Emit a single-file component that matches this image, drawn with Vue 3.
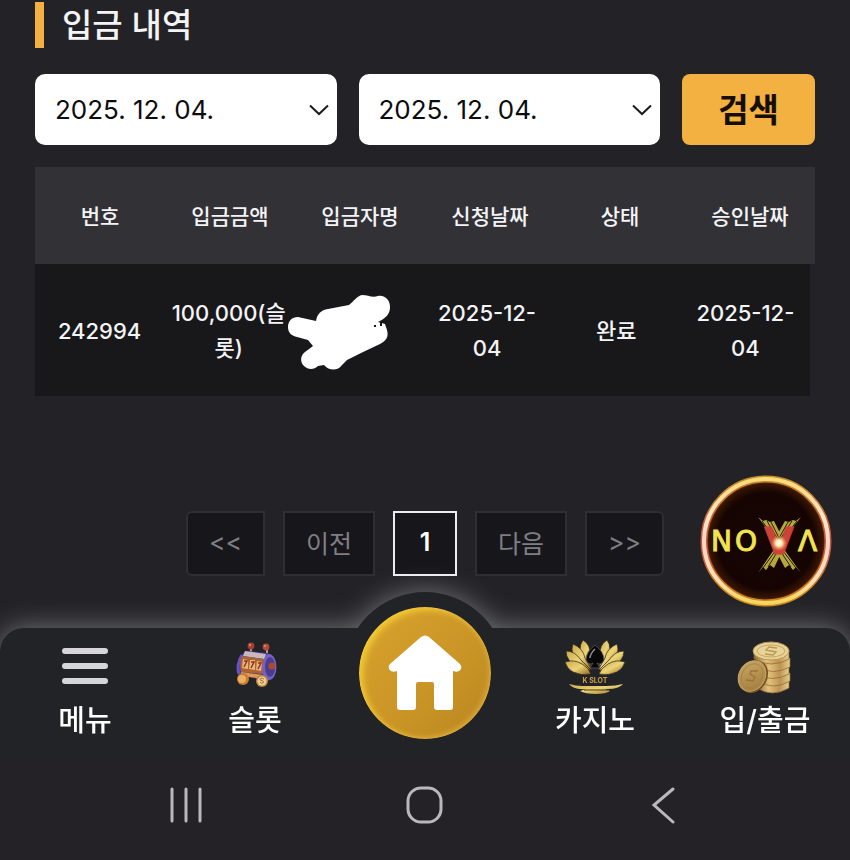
<template>
  <div class="deposit-page">
    <main class="content">
      <h1 class="page-title">입금 내역</h1>

      <form class="search-form" @submit.prevent>
        <label class="date-box">
          <select v-model="startDate" aria-label="시작일">
            <option>2025. 12. 04.</option>
          </select>
          <svg class="chevron" viewBox="0 0 20 12"><path d="M1 1.5 L10 10 L19 1.5" /></svg>
        </label>
        <label class="date-box">
          <select v-model="endDate" aria-label="종료일">
            <option>2025. 12. 04.</option>
          </select>
          <svg class="chevron" viewBox="0 0 20 12"><path d="M1 1.5 L10 10 L19 1.5" /></svg>
        </label>
        <button type="submit" class="search-btn">검색</button>
      </form>

      <table class="history">
        <thead>
          <tr>
            <th v-for="h in headers" :key="h">{{ h }}</th>
          </tr>
        </thead>
        <tbody>
          <tr v-for="row in rows" :key="row.no">
            <td>{{ row.no }}</td>
            <td>{{ row.amount }}</td>
            <td class="name-cell">
              <!-- 입금자명 가림 -->
              <svg class="mask" viewBox="0 0 104 76">
                <path d="M10 22 C4 22 0 26 0 32 C0 38 4 41 9 42 L20 45 L25 51 L17 57 C12 61 12 67 16 71 C20 75 26 75 30 71 L36 70 C41 76 50 76 54 70 L59 65 L73 58 L92 49 C98 46 101 42 99 35 L97 29 L90 27 C98 23 102 19 102 12 C102 4 96 0 90 1 C84 3 80 0 74 0 C69 1 66 6 61 10 L40 14 C33 15 29 19 28 26 Z" />
                <path class="stroke" d="M86 31 H88 M93 26 V31" />
              </svg>
            </td>
            <td>{{ row.requested }}</td>
            <td>{{ row.status }}</td>
            <td>{{ row.approved }}</td>
          </tr>
        </tbody>
      </table>

      <nav class="pagination" aria-label="페이지">
        <button
          v-for="p in pages"
          :key="p"
          type="button"
          :class="{ active: p === '1' }"
        >{{ p }}</button>
      </nav>
    </main>

    <a href="#nova" class="nova" aria-label="NOVA">
      <svg viewBox="0 0 132 132">
        <defs>
          <linearGradient id="ring" x1="0" y1="0" x2="0" y2="1">
            <stop offset="0" stop-color="#f8dc78" />
            <stop offset="0.3" stop-color="#ffe5c8" />
            <stop offset="0.55" stop-color="#ffd5ca" />
            <stop offset="0.8" stop-color="#ffe2b8" />
            <stop offset="1" stop-color="#f6d45e" />
          </linearGradient>
          <linearGradient id="halo" x1="0" y1="0" x2="0" y2="1">
            <stop offset="0" stop-color="#c88b2c" />
            <stop offset="0.5" stop-color="#c84f3c" />
            <stop offset="1" stop-color="#ce8c20" />
          </linearGradient>
          <radialGradient id="disc">
            <stop offset="0" stop-color="#170503" />
            <stop offset="0.78" stop-color="#150402" />
            <stop offset="0.92" stop-color="#381502" />
            <stop offset="1" stop-color="#a5540d" />
          </radialGradient>
          <radialGradient id="flare">
            <stop offset="0" stop-color="#fff" />
            <stop offset="0.4" stop-color="#ffe9ad" />
            <stop offset="1" stop-color="#f2a05a" stop-opacity="0" />
          </radialGradient>
        </defs>
        <circle cx="66" cy="66" r="62" fill="url(#disc)" />
        <circle cx="66" cy="66" r="62" fill="none" stroke="url(#halo)" stroke-width="7" />
        <circle cx="66" cy="66" r="62" fill="none" stroke="url(#ring)" stroke-width="4" />
        <g fill="#b5a83f">
          <path d="M58 42 L63 46 L66 45 L70 47 L74 46 L82 62 L76 66 Z" />
          <path d="M101 42 L96 46 L93 45 L89 47 L85 46 L76 62 L82 66 Z" />
          <path d="M58 98 L63 92 L66 95 L70 90 L74 93 L83 74 L75 73 Z" />
          <path d="M101 98 L96 92 L93 95 L89 90 L85 93 L75 74 L83 73 Z" />
        </g>
        <path d="M62 46 L78 68 M67 46 L79 66 M71 47 L80 65 M97 46 L80 68 M92 46 L79 66 M88 47 L78 65 M63 93 L78 72 M68 92 L79 74 M96 93 L80 72 M91 92 L79 74" fill="none" stroke="#2b1a0a" />
        <g class="nova-text">
          <text x="11" y="76">N</text>
          <text x="35" y="76">O</text>
          <text x="98" y="76">Λ</text>
          <text x="79" y="79" class="nova-v">V</text>
        </g>
        <circle cx="79" cy="68" r="8" fill="url(#flare)" />
      </svg>
    </a>

    <nav class="tab-bar">
      <a href="#menu" class="tab">
        <svg class="tab-icon" viewBox="0 0 60 56">
          <path d="M10 11 H50 M10 26 H50 M10 41 H50" stroke="#d6d6da" stroke-width="6" stroke-linecap="round" />
        </svg>
        <span>메뉴</span>
      </a>
      <a href="#slot" class="tab">
        <svg class="tab-icon" viewBox="0 0 60 56">
          <path d="M26 13 V6 M42 14 V7" stroke="#b29aa0" stroke-width="2" />
          <circle cx="26" cy="6" r="3.4" fill="#a83d32" />
          <circle cx="41" cy="7" r="3.4" fill="#b8483b" />
          <circle cx="25" cy="5" r="1" fill="#e8907d" />
          <circle cx="40" cy="6" r="1" fill="#e8907d" />
          <path d="M18 13 Q20 10 25 11 L42 13 Q51 15 51 26 Q51 39 43 41 L17 36 Q11 34 12 25 Z" fill="#45358e" />
          <ellipse cx="44" cy="27" rx="7.5" ry="13" fill="#7461c4" />
          <ellipse cx="45" cy="27" rx="5" ry="10" fill="#4a3c90" />
          <path d="M17 15 Q11 25 14 34" fill="none" stroke="#6552cc" stroke-width="3" />
          <path d="M20 11 L41 14 L39 19 L18 16 Z" fill="#c9b8be" />
          <path d="M17 16 L39 19 Q36 27 38 34 L16 32 Q14 24 17 16 Z" fill="#ad6435" />
          <path d="M18 19 L23 20 V29 L17 28 Z M25 20 L30 20 V30 L24 29 Z M32 21 L37 22 L36 31 L31 30 Z" fill="#edb476" />
          <path d="M19 21 H22 L19 27 M26 22 H29 L26 28 M33 23 H36 L33 29" fill="none" stroke="#8b352a" stroke-width="1.5" />
          <path d="M16 32 L38 35 L39 39 L17 36 Z" fill="#e09a4c" />
          <circle cx="47" cy="26" r="3.5" fill="#a84b31" />
          <circle cx="18" cy="39" r="6" fill="#c87d35" />
          <circle cx="17" cy="39" r="4" fill="#eaaf61" />
          <circle cx="37" cy="41" r="6" fill="#bd8741" />
          <circle cx="37" cy="41" r="4.5" fill="#edcf93" />
          <path d="M39 39 Q35 37 35 40 Q40 41 38 43 Q36 44 35 42" fill="none" stroke="#a57537" />
        </svg>
        <span>슬롯</span>
      </a>
      <a href="#home" class="tab home" aria-label="홈">
        <span class="home-btn">
          <svg viewBox="0 0 76 76">
            <path d="M34 2 Q38 -1 42 2 L73 29 Q75 31 74 34 Q72 38 66 36 V72 Q66 75 63 75 H50 Q47 75 47 72 V49 Q47 47 45 47 H31 Q29 47 29 49 V72 Q29 75 26 75 H13 Q10 75 10 72 V36 Q4 38 2 34 Q1 31 3 29 Z" fill="#fff" />
          </svg>
        </span>
      </a>
      <a href="#casino" class="tab">
        <svg class="tab-icon" viewBox="0 0 60 56">
          <defs>
            <linearGradient id="gold" x1="0" y1="0" x2="1" y2="1">
              <stop offset="0" stop-color="#c9a746" />
              <stop offset="0.5" stop-color="#ecd478" />
              <stop offset="1" stop-color="#8f681a" />
            </linearGradient>
          </defs>
          <g fill="url(#gold)" stroke="#29231a" stroke-width="0.7">
            <path d="M18 0 Q26 5 25 15 Q24 21 26 27 Q14 18 15 9 Q15 4 18 0 Z" />
            <path d="M8 4 Q18 8 20 18 L27 30 Q12 26 8 15 Q6 9 8 4 Z" />
            <path d="M1 11 Q10 11 16 20 L26 30 Q11 30 4 20 Q1 16 1 11 Z" />
            <path d="M0 22 Q9 19 17 24 Q24 28 26 34 Q16 36 8 32 Q2 29 0 22 Z" />
            <path d="M42 0 Q34 5 35 15 Q36 21 34 27 Q46 18 45 9 Q45 4 42 0 Z" />
            <path d="M52 4 Q42 8 40 18 L33 30 Q48 26 52 15 Q54 9 52 4 Z" />
            <path d="M59 11 Q50 11 44 20 L34 30 Q49 30 56 20 Q59 16 59 11 Z" />
            <path d="M60 22 Q51 19 43 24 Q36 28 34 34 Q44 36 52 32 Q58 29 60 22 Z" />
          </g>
          <path d="M30 5 Q39 12 39 20 Q36 26 32 23 L35 28 H25 L28 23 Q24 26 21 20 Q21 12 30 5 Z" fill="#08080b" stroke="#55555e" stroke-width="0.8" />
          <path d="M30 9 Q25 14 25 18" fill="none" stroke="#8b8b94" stroke-width="1.5" />
          <text x="30" y="43" class="kslot">K SLOT</text>
          <path d="M4 44 Q11 46 18 46 H42 Q51 46 58 44 Q54 49 43 49 H40 L45 51 Q41 54 31 54 Q20 54 15 51 L21 49 Q8 50 4 44 Z" fill="url(#gold)" />
          <path d="M19 50 H43" stroke="#463612" stroke-width="1" />
        </svg>
        <span>카지노</span>
      </a>
      <a href="#cash" class="tab">
        <svg class="tab-icon" viewBox="0 0 60 56">
          <defs>
            <linearGradient id="coin-side">
              <stop offset="0" stop-color="#8f6b36" />
              <stop offset="0.35" stop-color="#e2c27c" />
              <stop offset="0.7" stop-color="#bd9352" />
              <stop offset="1" stop-color="#e7cf8f" />
            </linearGradient>
            <linearGradient id="coin-face" x1="0" y1="0" x2="1" y2="1">
              <stop offset="0" stop-color="#c9aa66" />
              <stop offset="1" stop-color="#a07838" />
            </linearGradient>
          </defs>
          <g fill="url(#coin-side)" stroke="#8a632f" stroke-width="0.7">
            <path d="M22 40 V48 Q37 58 54 48 V40 Z" />
            <path d="M23 33 V41 Q38 51 55 41 V33 Z" />
            <path d="M22 26 V34 Q37 43 54 34 V26 Z" />
            <path d="M23 18 V27 Q38 36 55 27 V18 Z" />
            <path d="M19 10 V19 Q36 29 54 19 V10 Z" />
          </g>
          <ellipse cx="36" cy="11" rx="18" ry="9" fill="#e8d398" stroke="#ba9650" />
          <ellipse cx="36" cy="11" rx="14" ry="6" fill="none" stroke="#c6a663" />
          <path d="M42 8 L34 7 L31 10 L41 12 L38 15 L30 14" fill="none" stroke="#b99854" stroke-width="1.4" />
          <ellipse cx="19" cy="37" rx="13" ry="17" transform="rotate(30 19 37)" fill="#765126" />
          <ellipse cx="17" cy="36" rx="13" ry="16" transform="rotate(30 17 36)" fill="url(#coin-face)" stroke="#c7a763" />
          <ellipse cx="17" cy="36" rx="10" ry="13" transform="rotate(30 17 36)" fill="none" stroke="#a5804a" stroke-width="0.8" />
          <path d="M23 31 L16 31 L15 34 L20 37 L18 41 L11 40" fill="none" stroke="#9b7438" stroke-width="1.4" />
        </svg>
        <span>입/출금</span>
      </a>
    </nav>

    <div class="system-bar">
      <button type="button" aria-label="최근 앱">
        <svg viewBox="0 0 38 38"><path d="M5 3 V35 M19 3 V35 M33 3 V35" /></svg>
      </button>
      <button type="button" aria-label="홈 화면">
        <svg viewBox="0 0 38 38"><rect x="2" y="2" width="33" height="34" rx="13" /></svg>
      </button>
      <button type="button" aria-label="뒤로">
        <svg viewBox="0 0 38 38"><path d="M28 3 L9 19 L28 36" /></svg>
      </button>
    </div>
  </div>
</template>

<script setup>
import { ref } from 'vue'

const startDate = ref('2025. 12. 04.')
const endDate = ref('2025. 12. 04.')

const headers = ['번호', '입금금액', '입금자명', '신청날짜', '상태', '승인날짜']

const rows = [
  {
    no: '242994',
    amount: '100,000(슬롯)',
    requested: '2025-12-04',
    status: '완료',
    approved: '2025-12-04',
  },
]

const pages = ['<<', '이전', '1', '다음', '>>']
</script>

<style>
body {
  margin: 0;
  background: #232327;
}
</style>

<style scoped>
.deposit-page {
  position: relative;
  display: flex;
  flex-direction: column;
  min-height: 100vh;
  overflow: hidden;
  background: #232327;
  color: #f4f4f6;
  font-family: Inter, 'Noto Sans CJK KR', sans-serif;
}
.deposit-page * {
  box-sizing: border-box;
}
button,
select {
  font-family: inherit;
  cursor: pointer;
}
.content {
  flex: 1;
  padding: 2px 35px 0;
}
.page-title {
  margin: 0 0 26px;
  padding-left: 18px;
  border-left: 9px solid #f2b141;
  font-size: 33px;
  line-height: 46px;
  font-weight: 500;
}

/* 검색 */
.search-form {
  display: flex;
  gap: 22px;
  margin-bottom: 22px;
}
.date-box {
  position: relative;
  flex: 1;
}
.date-box select {
  display: block;
  width: 100%;
  height: 71px;
  padding: 0 48px 0 20px;
  appearance: none;
  border: none;
  border-radius: 10px;
  background: #fff;
  color: #0c0c0e;
  font-size: 26px;
  font-weight: 400;
}
.chevron {
  position: absolute;
  right: 8px;
  top: 30px;
  width: 20px;
  height: 12px;
  fill: none;
  stroke: #1c1c1e;
  stroke-width: 2;
  pointer-events: none;
}
.search-btn {
  width: 133px;
  height: 71px;
  padding: 0 0 4px;
  border: none;
  border-radius: 8px;
  background: #f2b141;
  color: #160d04;
  font-size: 33px;
  font-weight: 700;
}

/* 내역 표 */
.history {
  display: block;
  font-size: 21px;
  line-height: 35px;
}
.history thead,
.history tbody {
  display: table;
  table-layout: fixed;
  border-collapse: collapse;
}
.history thead {
  width: 100%;
  background: #323236;
}
.history tbody {
  width: calc(100% - 5px);
  background: #18181b;
  font-size: 22px;
}
.history th,
.history td {
  padding: 2px 5px 0;
  text-align: center;
  font-weight: 500;
}
.history th {
  height: 97px;
}
.history td {
  height: 132px;
}
.name-cell {
  position: relative;
}
.mask {
  position: absolute;
  left: -5px;
  top: 31px;
  width: 104px;
  height: 76px;
  fill: #fff;
}
.mask .stroke {
  fill: none;
  stroke: #18181b;
  stroke-width: 2;
}

/* 페이지 */
.pagination {
  display: flex;
  justify-content: center;
  gap: 18px;
  margin-top: 115px;
}
.pagination button {
  height: 65px;
  min-width: 64px;
  padding: 0 21px 4px;
  border: 2px solid #2e2e33;
  background: #17171b;
  color: #7f7f84;
  font-size: 25px;
}
.pagination button:first-child {
  border-radius: 6px 0 0 6px;
}
.pagination button:last-child {
  border-radius: 0 6px 6px 0;
}
.pagination .active {
  border-color: #ececf2;
  color: #fff;
  font-weight: 600;
}

.nova {
  position: absolute;
  right: 18px;
  bottom: 253px;
  z-index: 2;
  width: 132px;
  height: 132px;
}
.nova svg {
  display: block;
}
.nova-text {
  fill: #f1e34e;
  stroke: #f1e34e;
  stroke-width: 1;
  font-family: 'DejaVu Sans', sans-serif;
  font-size: 28px;
}
.nova-v {
  fill: #cb4238;
  stroke: #cb4238;
  font-size: 38px;
  font-weight: 700;
  text-anchor: middle;
}

/* 하단 탭 */
.tab-bar {
  display: grid;
  grid-template-columns: repeat(5, 1fr);
  height: 132px;
  border-radius: 24px 24px 0 0;
  background: #222326;
  filter: drop-shadow(0 0 14px rgba(255, 255, 255, 0.38));
}
.tab {
  display: flex;
  flex-direction: column;
  align-items: center;
  gap: 7px;
  padding-top: 12px;
  color: #fff;
  font-size: 29px;
  line-height: 36px;
  font-weight: 500;
  text-decoration: none;
}
.tab-icon {
  width: 60px;
  height: 56px;
  fill: none;
}
.kslot {
  fill: #c8a04b;
  font-size: 7px;
  font-weight: 700;
  text-anchor: middle;
}
.home {
  padding-top: 0;
}
.home-btn {
  display: grid;
  place-items: center;
  flex: none;
  width: 162px;
  height: 162px;
  margin-top: -36px;
  border: 15px solid #222326;
  border-radius: 50%;
  background: linear-gradient(135deg, #d9a32d, #c99426 60%, #b8861f) padding-box;
  box-shadow: inset 4px 3px 6px #f3cb35, inset -2px -2px 5px #d7a73b;
}
.home-btn svg {
  width: 76px;
  height: 76px;
}

.system-bar {
  position: relative;
  display: flex;
  justify-content: space-around;
  align-items: center;
  height: 100px;
  padding: 0 66px 10px;
  background: #252227;
}
.system-bar button {
  padding: 0;
  border: none;
  background: none;
}
.system-bar svg {
  display: block;
  width: 38px;
  height: 38px;
  fill: none;
  stroke: #b9b8bd;
  stroke-width: 3;
  stroke-linecap: round;
}
</style>
